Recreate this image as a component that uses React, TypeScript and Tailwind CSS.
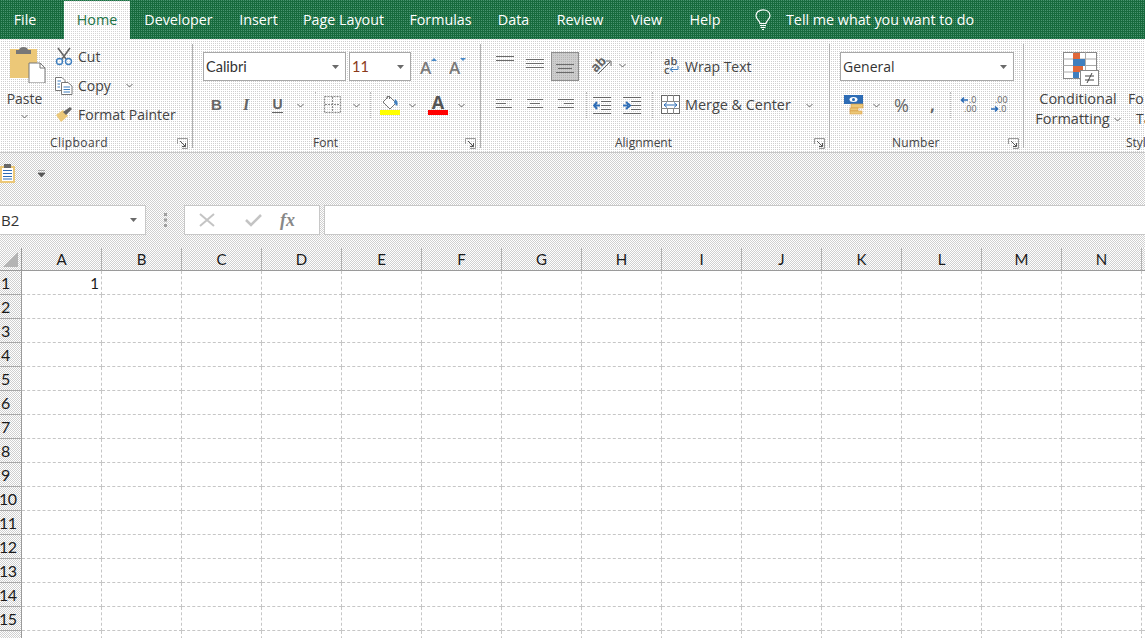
import React from "react";

const Chev = ({ className = "" }: { className?: string }) => (
  <svg width="7" height="5" viewBox="0 0 7 5" className={className}>
    <path d="M0.5 1 L3.5 4 L6.5 1" fill="none" stroke="#666" strokeWidth="1" />
  </svg>
);
const Caret = () => (
  <svg width="7" height="4" viewBox="0 0 7 4"><path d="M0 0H7L3.500 4Z" fill="#6a6a6a" /></svg>
);
const Launcher = ({ className = "" }: { className?: string }) => (
  <svg width="11" height="11" viewBox="0 0 11 11" className={className}>
    <path d="M0.5 6V0.5H10.5V10.5H5" fill="none" stroke="#9a9a9a" />
    <path d="M3 3L8.5 8.5M8.5 5V8.5H5" fill="none" stroke="#555" />
  </svg>
);
const Lines = ({ ws, x = "l", gap = 4 }: { ws: number[]; x?: "l" | "c" | "r"; gap?: number }) => (
  <svg width="20" height={ws.length * gap + 1} viewBox={`0 0 20 ${ws.length * gap + 1}`}>
    {ws.map((w, i) => {
      const s = x === "l" ? 1 : x === "c" ? (20 - w) / 2 : 19 - w;
      return <rect key={i} x={s} y={i * gap} width={w} height="1" fill="#6b6b6b" />;
    })}
  </svg>
);

const Tab = ({ label, className }: { label: string; className: string }) => (
  <div className={`flex h-[39px] items-center justify-center text-[14.3px] text-white ${className}`}>{label}</div>
);

const PasteIcon = () => (
  <svg width="36" height="38" viewBox="0 0 36 38">
    <rect x="0" y="4" width="27" height="29" fill="#ecc878" />
    <path d="M6 5H9C9 1 18 1 18 5H21V9H6Z" fill="#777" />
    <path d="M19 18H30L35 23V38H19Z" fill="#fff" stroke="#777" />
    <path d="M30 18V23H35" fill="none" stroke="#777" />
  </svg>
);
const CutIcon = () => (
  <svg width="18" height="19" viewBox="0 0 18 19">
    <path d="M3 1L11 12M15 1L7 12" stroke="#666" strokeWidth="1.6" fill="none" />
    <circle cx="4.5" cy="14.5" r="3" fill="none" stroke="#3f7fbf" strokeWidth="1.4" />
    <circle cx="13.5" cy="14.5" r="3" fill="none" stroke="#3f7fbf" strokeWidth="1.4" />
  </svg>
);
const CopyIcon = () => (
  <svg width="18" height="18" viewBox="0 0 18 18">
    <path d="M0.5 0.5H7L10 3.5V13.5H0.5Z" fill="#fff" stroke="#777" />
    <path d="M6.5 5.5H13L17 9V17.5H6.5Z" fill="#fff" stroke="#777" />
    <path d="M2.5 4H6M2.5 7H5M2.5 10H5M8.5 10H15M8.5 12.5H15M8.5 15H15" stroke="#3f7fbf" />
  </svg>
);
const PainterIcon = () => (
  <svg width="18" height="17" viewBox="0 0 18 17">
    <path d="M1 9L8 4L13 10L6 16Z" fill="#ecc878" />
    <path d="M8 6L15 1L17 3L11 9Z" fill="#666" />
  </svg>
);
const GrowA = ({ up }: { up: boolean }) => (
  <svg width="18" height="18" viewBox="0 0 18 18">
    <text x="0" y="17" fontFamily="Open Sans" fontSize="17" fontWeight="600" fill="#7a7a7a">A</text>
    {up ? <path d="M11 4L14 1L17 4Z" fill="#4a8ac8" /> : <path d="M11 1H17L14 4Z" fill="#4a8ac8" />}
  </svg>
);
const BorderIcon = () => (
  <svg width="18" height="18" viewBox="0 0 18 18">
    <rect x="0.5" y="0.5" width="16" height="16" fill="none" stroke="#8a8a8a" strokeDasharray="2 1" />
    <path d="M8.5 1V16M1 8.5H16" stroke="#8a8a8a" strokeDasharray="2 1" />
  </svg>
);
const FillIcon = () => (
  <div className="flex w-[20px] flex-col items-center">
    <svg width="20" height="15" viewBox="0 0 20 15">
      <path d="M9 1L16 8L10 14L3 7Z" fill="#fff" stroke="#777" />
      <path d="M7 4V1.500H9.500V4" fill="none" stroke="#777" />
      <path d="M15 4C18 6 18 9 17 11L14 8Z" fill="#3f7fbf" />
    </svg>
    <div className="h-[5px] w-[20px] bg-[#ffff00]" />
  </div>
);
const FontColorIcon = () => (
  <div className="flex w-[20px] flex-col items-center">
    <div className="h-[15px] text-[18px] font-bold leading-[15px] text-[#555]">A</div>
    <div className="h-[5px] w-[20px] bg-[#ff0000]" />
  </div>
);
const OrientIcon = () => (
  <svg width="20" height="18" viewBox="0 0 20 18">
    <g transform="rotate(-45 8 9)">
      <text x="0" y="11" fontFamily="Open Sans" fontWeight="700" fontSize="13" fill="#666">ab</text>
    </g>
    <path d="M6 17L18 5M14 4H19V9" stroke="#666" fill="none" />
  </svg>
);
const IndentIcon = ({ inc }: { inc: boolean }) => (
  <svg width="19" height="17" viewBox="0 0 19 17">
    <path d="M0 0.5H18M8 4.500H18M8 8.500H18M8 12.500H18M0 16.500H18" stroke="#666" />
    {inc ? <path d="M0 8.500H5M3 5L7 8.500L3 12" stroke="#2d6cb5" strokeWidth="2" fill="none" />
      : <path d="M7 8.500H2M4 5L1 8.500L4 12" stroke="#2d6cb5" strokeWidth="2" fill="none" />}
  </svg>
);
const WrapIcon = () => (
  <div className="flex w-[17px] flex-col text-[11px] font-semibold leading-[9px] text-[#555]">
    <span>ab</span>
    <span className="flex items-center">
      c
      <svg width="10" height="8" viewBox="0 0 10 8"><path d="M9 0V3.500H2M4 1L1 3.500L4 6" fill="none" stroke="#3f7fbf" /></svg>
    </span>
  </div>
);
const MergeIcon = () => (
  <svg width="20" height="20" viewBox="0 0 20 20">
    <rect x="0.5" y="0.5" width="18" height="18" fill="#fff" stroke="#666" />
    <path d="M0 6.500H19M0 13.500H19M6.500 0V6M12.500 0V6M6.500 14V19M12.500 14V19" stroke="#888" />
    <path d="M3 10H16M6 7.500L3 10L6 12.500M13 7.500L16 10L13 12.500" fill="none" stroke="#2d6cb5" />
  </svg>
);
const CurrencyIcon = () => (
  <svg width="20" height="20" viewBox="0 0 20 20">
    <rect x="0" y="0" width="19" height="9" fill="#2d6cb5" />
    <ellipse cx="9.500" cy="4.500" rx="4" ry="2.500" fill="#fff" />
    <ellipse cx="9.500" cy="4.500" rx="1.500" ry="1.500" fill="#2d6cb5" />
    <rect x="7" y="9" width="12" height="4" fill="#ecc878" stroke="#d89a45" strokeWidth="0.6" />
    <rect x="6" y="13" width="8" height="3" fill="#ecc878" stroke="#d89a45" strokeWidth="0.6" />
    <rect x="6" y="16" width="12" height="3" fill="#ecc878" stroke="#d89a45" strokeWidth="0.6" />
  </svg>
);
const DecIcon = ({ inc }: { inc: boolean }) => (
  <svg width="18" height="18" viewBox="0 0 18 18">
    <text x={inc ? 9 : 5} y="7" fontFamily="Open Sans" fontSize="9" fill="#666">{inc ? ".0" : ".00"}</text>
    <text x={inc ? 4 : 9} y="16" fontFamily="Open Sans" fontSize="9" fill="#666">{inc ? ".00" : ".0"}</text>
    {inc ? <path d="M8 4H2M4 1.500L1.500 4L4 6.500" stroke="#2d6cb5" strokeWidth="1.6" fill="none" />
      : <path d="M1 13H7M5 10.500L7.500 13L5 15.500" stroke="#2d6cb5" strokeWidth="1.6" fill="none" />}
  </svg>
);
const CondIcon = () => (
  <svg width="38" height="36" viewBox="0 0 38 36">
    <rect x="1.5" y="0.5" width="33" height="26" fill="#fff" stroke="#888" />
    <path d="M1 7H34M1 13.500H34M1 20H34M11.500 0V27M23.500 0V27" stroke="#aaa" />
    <rect x="11" y="1" width="7" height="6" fill="#e0683a" />
    <rect x="11" y="7" width="12" height="7" fill="#3f7fbf" />
    <rect x="11" y="14" width="10" height="6" fill="#e0683a" />
    <rect x="11" y="20" width="6" height="6" fill="#3f7fbf" />
    <rect x="18.500" y="18.500" width="18" height="15" fill="#fff" stroke="#888" />
    <path d="M23 24H32M23 28H32M30 21L25 31" stroke="#444" fill="none" />
  </svg>
);
const BulbIcon = () => (
  <svg width="16" height="21" viewBox="0 0 16 21" fill="none" stroke="#fff" strokeWidth="1.2">
    <path d="M5 14.500C5 11.500 1 10.500 1 6.800C1 3.200 4 0.800 8 0.800C12 0.800 15 3.200 15 6.800C15 10.500 11 11.500 11 14.500Z" />
    <path d="M5 16.500H11M5.500 18.500H10.500M7 20.500H9" />
  </svg>
);
const ClipSmall = () => (
  <svg width="15" height="20" viewBox="0 0 15 20">
    <rect x="0" y="2" width="15" height="17" fill="#ecc878" />
    <rect x="2" y="4" width="11" height="13" fill="#fff" />
    <rect x="4" y="0" width="7" height="4" fill="#666" />
    <path d="M3 6.500H12M3 9.500H12M3 12.500H12M3 15H12" stroke="#2d6cb5" />
  </svg>
);

const Ui = "font-['Open_Sans',sans-serif]";
const cols = ["A", "B", "C", "D", "E", "F", "G", "H", "I", "J", "K", "L", "M", "N", ""];
const rows = Array.from({ length: 16 }, (_, i) => i + 1);

const DottedSep = ({ className }: { className: string }) => (
  <div className={`h-[26px] border-l border-dotted border-[#b8b8b8] ${className}`} />
);

const Label = ({ children, className }: { children: React.ReactNode; className: string }) => (
  <div className={`flex h-[20px] shrink-0 items-center text-[12px] text-[#444] ${className}`}>{children}</div>
);

export default function App() {
  return (
    <div className={`flex h-[638px] w-[1145px] flex-col overflow-hidden bg-white ${Ui}`}>
      {/* Tabs */}
      <div className="flex h-[39px] shrink-0 bg-[#196b3e] bg-[conic-gradient(#4a9470_25%,#176a3d_0)] bg-[length:2px_2px]">
        <Tab label="File" className="w-[50px]" />
        <div className="ml-[14px] mt-[1px] flex h-[38px] w-[66px] items-center justify-center bg-[conic-gradient(#d4d4d4_25%,#fff_0)] bg-[length:2px_2px] text-[14.3px] text-[#217346]">Home</div>
        <Tab label="Developer" className="w-[97px]" />
        <Tab label="Insert" className="w-[63px]" />
        <Tab label="Page Layout" className="w-[107px]" />
        <Tab label="Formulas" className="w-[87px]" />
        <Tab label="Data" className="w-[59px]" />
        <Tab label="Review" className="w-[74px]" />
        <Tab label="View" className="w-[59px]" />
        <Tab label="Help" className="w-[58px]" />
        <div className="ml-[21px] flex items-center"><BulbIcon /></div>
        <div className="ml-[15px] flex items-center whitespace-nowrap text-[14.3px] text-white">Tell me what you want to do</div>
      </div>

      {/* Ribbon */}
      <div className="flex h-[114px] shrink-0 border-b border-[#c8c8c8] bg-[conic-gradient(#cfcfcf_25%,#fff_0)] bg-[length:2px_2px] pt-[5px] text-[14px] text-[#444]">
        {/* Clipboard */}
        <div className="flex h-[104px] w-[193px] shrink-0 flex-col border-r border-[#b0b0b0]">
          <div className="flex h-[84px] shrink-0">
            <div className="ml-[3px] flex w-[46px] flex-col items-center">
              <div className="mt-[1px] ml-[3px]"><PasteIcon /></div>
              <div className="mt-[7px] ml-[-3px] leading-[18px]">Paste</div>
              <Chev className="mt-[6px] ml-[-3px]" />
            </div>
            <div className="ml-[6px] flex flex-col">
              <div className="flex h-[25px] items-center gap-[5px]"><CutIcon /><span>Cut</span></div>
              <div className="flex h-[33px] items-center gap-[5px]"><CopyIcon /><span>Copy</span><Chev className="ml-[10px]" /></div>
              <div className="flex h-[25px] items-center gap-[5px] whitespace-nowrap"><PainterIcon /><span>Format Painter</span></div>
            </div>
          </div>
          <Label className="mt-[5px] justify-between pl-[50px] pr-[4px]"><span className="tracking-[0.4px]">Clipboard</span><Launcher /></Label>
        </div>
        {/* Font */}
        <div className="flex h-[104px] w-[288px] shrink-0 flex-col border-r border-[#b0b0b0]">
          <div className="flex h-[48px] shrink-0 items-start pt-[8px]">
            <div className="ml-[10px] flex h-[29px] w-[143px] items-center justify-between border border-[#a8a8a8] bg-white pl-[2px] pr-[6px] font-['Lato',sans-serif] text-[14.5px] text-[#333]">Calibri<Caret /></div>
            <div className="ml-[3px] flex h-[29px] w-[62px] items-center justify-between border border-[#a8a8a8] bg-white pl-[2px] pr-[6px] font-['Lato',sans-serif] text-[14.5px] text-[#8a3a1a]">11<Caret /></div>
            <div className="ml-[9px] mt-[5px]"><GrowA up /></div>
            <div className="ml-[11px] mt-[5px]"><GrowA up={false} /></div>
          </div>
          <div className="flex h-[28px] shrink-0 items-center pb-[2px]">
            <span className="ml-[18px] w-[32px] font-['Liberation_Sans',sans-serif] text-[15px] font-bold text-[#666]">B</span>
            <span className="w-[29px] font-['Liberation_Serif',serif] text-[16px] font-bold italic text-[#666]">I</span>
            <span className="w-[11px] border-b border-[#666] text-center font-['Liberation_Sans',sans-serif] text-[14px] font-bold leading-[15px] text-[#666]">U</span>
            <Chev className="ml-[14px]" />
            <DottedSep className="ml-[11px]" />
            <div className="ml-[8px]"><BorderIcon /></div>
            <Chev className="ml-[11px]" />
            <DottedSep className="ml-[10px]" />
            <div className="ml-[9px]"><FillIcon /></div>
            <Chev className="ml-[9px]" />
            <div className="ml-[12px]"><FontColorIcon /></div>
            <Chev className="ml-[10px]" />
          </div>
          <Label className="mt-[13px] justify-between pl-[120px] pr-[4px]"><span>Font</span><Launcher /></Label>
        </div>
        {/* Alignment */}
        <div className="flex h-[104px] w-[349px] shrink-0 flex-col border-r border-[#b0b0b0]">
          <div className="flex h-[48px] shrink-0 items-start pt-[8px]">
            <div className="ml-[14px] mt-[4px]"><Lines ws={[18, 18]} /></div>
            <div className="ml-[10px] mt-[7px]"><Lines ws={[18, 18, 18]} /></div>
            <div className="ml-[6px] flex h-[29px] w-[28px] items-center justify-center border border-[#8e8e8e] bg-[conic-gradient(#b4b4b4_25%,#cecece_0)] bg-[length:2px_2px] pt-[8px]"><Lines ws={[18, 14, 18]} x="c" /></div>
            <div className="ml-[13px] mt-[5px]"><OrientIcon /></div>
            <Chev className="ml-[7px] mt-[11px]" />
            <DottedSep className="ml-[25px]" />
            <div className="ml-[12px] mt-[4px]"><WrapIcon /></div>
            <div className="ml-[4px] mt-[4px]">Wrap Text</div>
          </div>
          <div className="flex h-[28px] shrink-0 items-center pb-[2px]">
            <div className="ml-[14px]"><Lines ws={[16, 10, 16]} /></div>
            <div className="ml-[10px]"><Lines ws={[16, 10, 16]} x="c" /></div>
            <div className="ml-[10px]"><Lines ws={[16, 10, 16]} x="r" /></div>
            <DottedSep className="ml-[11px]" />
            <div className="ml-[6px]"><IndentIcon inc={false} /></div>
            <div className="ml-[11px]"><IndentIcon inc /></div>
            <DottedSep className="ml-[10px]" />
            <div className="ml-[8px]"><MergeIcon /></div>
            <div className="ml-[4px] whitespace-nowrap text-[14.4px]">Merge &amp; Center</div>
            <Chev className="ml-[15px]" />
          </div>
          <Label className="mt-[13px] justify-between pl-[134px] pr-[4px]"><span>Alignment</span><Launcher /></Label>
        </div>
        {/* Number */}
        <div className="flex h-[104px] w-[194px] shrink-0 flex-col border-r border-[#b0b0b0]">
          <div className="flex h-[48px] shrink-0 items-start pt-[8px]">
            <div className="ml-[10px] flex h-[29px] w-[174px] items-center justify-between border border-[#a8a8a8] bg-white pl-[2px] pr-[6px] text-[14px] text-[#333]">General<Caret /></div>
          </div>
          <div className="flex h-[28px] shrink-0 items-center pb-[2px]">
            <div className="ml-[14px]"><CurrencyIcon /></div>
            <Chev className="ml-[9px]" />
            <span className="ml-[14px] w-[16px] text-[18px] text-[#666]">%</span>
            <span className="ml-[20px] w-[6px] text-[17px] font-bold leading-[12px] text-[#666]">,</span>
            <DottedSep className="ml-[14px]" />
            <div className="ml-[9px]"><DecIcon inc /></div>
            <div className="ml-[12px]"><DecIcon inc={false} /></div>
          </div>
          <Label className="mt-[13px] justify-between pl-[62px] pr-[4px]"><span className="tracking-[0.2px]">Number</span><Launcher /></Label>
        </div>
        {/* Styles */}
        <div className="flex h-[104px] flex-1 flex-col overflow-visible">
          <div className="flex h-[84px] shrink-0 overflow-hidden">
            <div className="ml-[9px] flex w-[90px] shrink-0 flex-col items-center">
              <div className="mt-[8px] ml-[6px]"><CondIcon /></div>
              <div className="mt-[1px] whitespace-nowrap text-[14.5px] leading-[20px]">Conditional</div>
              <div className="flex items-center gap-[4px] whitespace-nowrap text-[14.5px] leading-[20px]">Formatting<Chev /></div>
            </div>
            <div className="ml-[5px] flex flex-col">
              <div className="mt-[45px] leading-[20px]">Fo</div>
              <div className="ml-[8px] leading-[20px]">Ta</div>
            </div>
          </div>
          <Label className="mt-[5px] overflow-hidden pl-[102px]">Styles</Label>
        </div>
      </div>

      {/* QAT + formula band */}
      <div className="flex h-[95px] shrink-0 flex-col bg-[conic-gradient(#d0d0d0_25%,#fff_0_50%,#d0d0d0_0_75%,#fff_0)] bg-[length:2px_2px]">
        <div className="flex h-[52px] items-start pt-[11px]">
          <ClipSmall />
          <svg width="7" height="7" viewBox="0 0 7 7" className="ml-[23px] mt-[6px]">
            <path d="M0 0H7M0 3H7L3.500 7Z" stroke="#555" strokeWidth="0.8" fill="#555" />
          </svg>
        </div>
        <div className="flex h-[30px] text-[15px] text-[#333]">
          <div className="flex w-[146px] items-center justify-between border border-l-0 border-[#c8c8c8] bg-white pl-[1px] pr-[8px]">B2<Caret /></div>
          <div className="flex w-[38px] items-center justify-center">
            <svg width="3" height="14" viewBox="0 0 3 14"><path d="M0 0H3V3H0ZM0 5.500H3V8.500H0ZM0 11H3V14H0Z" fill="#a0a0a0" /></svg>
          </div>
          <div className="flex w-[136px] items-center border border-[#c8c8c8] bg-white">
            <svg width="16" height="14" viewBox="0 0 16 14" className="ml-[14px]"><path d="M1 1L15 13M15 1L1 13" stroke="#c4c4c4" strokeWidth="2" /></svg>
            <svg width="17" height="14" viewBox="0 0 17 14" className="ml-[30px]"><path d="M1 7L6 12L16 2" stroke="#c4c4c4" strokeWidth="2.500" fill="none" /></svg>
            <span className="ml-[18px] font-['Liberation_Serif',serif] text-[18px] font-bold italic leading-none text-[#888]">fx</span>
          </div>
          <div className="ml-[4px] mr-[-2px] flex-1 border border-[#c8c8c8] bg-white" />
        </div>
      </div>

      {/* Sheet */}
      <div className="flex-1 overflow-hidden font-['Lato',sans-serif] text-[15px] text-[#1a1a1a]">
        <div className="flex h-[23px] bg-[conic-gradient(#d0d0d0_25%,#fff_0_50%,#d0d0d0_0_75%,#fff_0)] bg-[length:2px_2px]">
          <div className="flex w-[22px] shrink-0 items-end border-r border-b border-[#9a9a9a] pb-[3px] pl-[3px]">
            <svg width="15" height="15" viewBox="0 0 15 15"><path d="M15 0V15H0Z" fill="#b4b4b4" /></svg>
          </div>
          {cols.map((c) => (
            <div key={c} className="flex w-[80px] shrink-0 items-center justify-center border-r border-b border-r-[#b0b0b0] border-b-[#9a9a9a]">{c}</div>
          ))}
        </div>
        {rows.map((r) => (
          <div key={r} className="flex h-[24px]">
            <div className="flex w-[22px] shrink-0 items-center overflow-hidden border-r border-b border-r-[#9a9a9a] border-b-[#a8a8a8] bg-[conic-gradient(#d0d0d0_25%,#fff_0_50%,#d0d0d0_0_75%,#fff_0)] bg-[length:2px_2px] pt-[1px] text-[16px] leading-none">
              <span className={r >= 10 ? "ml-[-1px] tracking-[-0.5px]" : "ml-[1px]"}>{r}</span>
            </div>
            {cols.map((c) => (
              <div key={c} className="flex w-[80px] shrink-0 items-center justify-end border-r border-b border-dashed border-[#c6c6c6] pt-[1px] pr-[2px]">
                {r === 1 && c === "A" ? "1" : ""}
              </div>
            ))}
          </div>
        ))}
      </div>
    </div>
  );
}
